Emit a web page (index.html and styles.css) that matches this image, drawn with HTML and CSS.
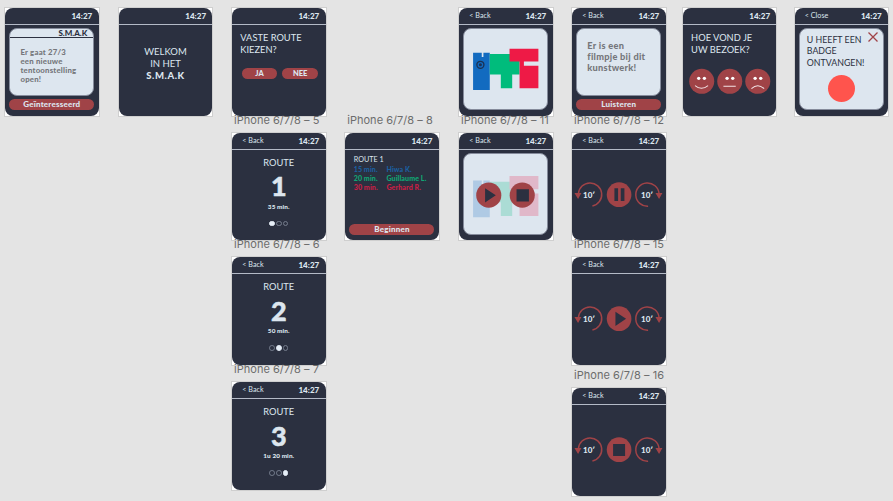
FILE: index.html
```html
<!DOCTYPE html>
<html lang="nl">
<head>
<meta charset="utf-8">
<title>S.M.A.K</title>
<link rel="stylesheet" href="styles.css">
</head>
<body>
<svg class="defs" aria-hidden="true">
  <symbol id="art" viewBox="0 0 196 124">
    <path fill="#126bc0" d="M0 13H26V26H31V13H50V124H0Z"/>
    <path fill="#00bc7c" d="M50 17H139V78H117V119H83V78H50Z"/>
    <path fill="#ee1a46" d="M109 0H196V39H152V52H196V119H139V39H109Z"/>
  </symbol>
  <symbol id="skips" viewBox="0 0 280 90">
    <g fill="none" stroke="#a04347" stroke-width="4.5">
      <path d="M19 41A35 35 0 1 1 61 78"/>
      <path d="M261 41A35 35 0 1 0 228 79"/>
    </g>
    <path fill="#a04347" d="M7 39H28L18 57ZM250 39H271L261 57Z"/>
    <circle cx="141" cy="44" r="37" fill="#a04347"/>
  </symbol>
</svg>
<main class="canvas">

  <section class="board c1 r1">
    <h2 class="label">iPhone 6/7/8</h2>
    <div class="screen">
      <header><b>14:27</b></header>
      <div class="card short">
        <div class="band">S.M.A.K</div>
        <p class="news">Er gaat 27/3<br>een nieuwe<br>tentoonstelling<br>open!</p>
      </div>
      <div class="button interest">Geïnteresseerd</div>
    </div>
  </section>

  <section class="board c2 r1">
    <h2 class="label">iPhone 6/7/8</h2>
    <div class="screen">
      <header><b>14:27</b></header>
      <p class="welcome">WELKOM<br>IN HET<br><b>S.M.A.K</b></p>
    </div>
  </section>

  <section class="board c3 r1">
    <h2 class="label">iPhone 6/7/8</h2>
    <div class="screen">
      <header><b>14:27</b></header>
      <p class="question">VASTE ROUTE<br>KIEZEN?</p>
      <div class="choices"><span class="button">JA</span><span class="button">NEE</span></div>
    </div>
  </section>

  <section class="board c5 r1">
    <h2 class="label">iPhone 6/7/8</h2>
    <div class="screen">
      <header><span>&lt; Back</span><b>14:27</b></header>
      <div class="card tall">
        <svg class="full" viewBox="0 0 254 245">
          <use href="#art" x="30" y="61" width="196" height="124"/>
          <circle cx="52" cy="110" r="10.5" fill="none" stroke="#1c3152" stroke-width="4"/>
          <circle cx="52" cy="110" r="4.5" fill="#1c3152"/>
        </svg>
      </div>
    </div>
  </section>

  <section class="board c6 r1">
    <h2 class="label">iPhone 6/7/8</h2>
    <div class="screen">
      <header><span>&lt; Back</span><b>14:27</b></header>
      <div class="card short"><p class="movie">Er is een<br>filmpje bij dit<br>kunstwerk!</p></div>
      <div class="button listen">Luisteren</div>
    </div>
  </section>

  <section class="board c7 r1">
    <h2 class="label">iPhone 6/7/8</h2>
    <div class="screen">
      <header><b>14:27</b></header>
      <p class="question visit">HOE VOND JE<br>UW BEZOEK?</p>
      <svg class="faces" viewBox="0 0 280 80">
        <g fill="#a04347"><circle cx="56" cy="40" r="37.5"/><circle cx="140" cy="40" r="37.5"/><circle cx="224" cy="40" r="37.5"/></g>
        <g fill="#fff"><circle cx="47" cy="31" r="5"/><circle cx="64" cy="31" r="5"/><circle cx="132" cy="31" r="5"/><circle cx="149" cy="31" r="5"/><circle cx="216" cy="31" r="5"/><circle cx="233" cy="31" r="5"/></g>
        <g fill="none" stroke="#f3e3e5" stroke-width="3"><path d="M36 53Q55 69 75 53M121 55H158M205 62Q224 44 243 62"/></g>
      </svg>
    </div>
  </section>

  <section class="board c8 r1">
    <h2 class="label">iPhone 6/7/8</h2>
    <div class="screen">
      <header><span>&lt; Close</span><b>14:27</b></header>
      <div class="card tall badge">
        <p>U HEEFT EEN<br>BADGE<br>ONTVANGEN!</p>
        <svg class="cross" viewBox="0 0 10 10"><path d="M.5.5 9.5 9.5M9.5.5.5 9.5" stroke="#a04347" stroke-width="1.3"/></svg>
        <div class="dot"></div>
      </div>
    </div>
  </section>

  <section class="board c3 r2">
    <h2 class="label">iPhone 6/7/8 – 5</h2>
    <div class="screen">
      <header><span>&lt; Back</span><b>14:27</b></header>
      <div class="route"><h3>ROUTE</h3><strong>1</strong><small>35 min.</small>
        <div class="pager"><i class="on"></i><i></i><i></i></div></div>
    </div>
  </section>

  <section class="board c4 r2">
    <h2 class="label">iPhone 6/7/8 – 8</h2>
    <div class="screen">
      <header><b>14:27</b></header>
      <div class="plan">
        <h3>ROUTE 1</h3>
        <div class="stop blue"><span>15 min.</span><span>Hiwa K.</span></div>
        <div class="stop green"><span>20 min.</span><span>Guillaume L.</span></div>
        <div class="stop red"><span>30 min.</span><span>Gerhard R.</span></div>
      </div>
      <div class="button begin">Beginnen</div>
    </div>
  </section>

  <section class="board c5 r2">
    <h2 class="label">iPhone 6/7/8 – 11</h2>
    <div class="screen">
      <header><span>&lt; Back</span><b>14:27</b></header>
      <div class="card tall">
        <svg class="full" viewBox="0 0 254 245">
          <use href="#art" x="30" y="69" width="196" height="124" opacity=".22"/>
          <g fill="#a04347"><circle cx="77" cy="126" r="37.5"/><circle cx="177" cy="126" r="37.5"/></g>
          <path fill="#2b3040" d="M66 105 98 126 66 148ZM160 108H197V145H160Z"/>
        </svg>
      </div>
    </div>
  </section>

  <section class="board c6 r2">
    <h2 class="label">iPhone 6/7/8 – 12</h2>
    <div class="screen">
      <header><span>&lt; Back</span><b>14:27</b></header>
      <svg class="controls" viewBox="0 0 280 90"><use href="#skips" width="280" height="90"/>
        <path fill="#2b3040" d="M127 25H138V63H127ZM146 25H157V63H146Z"/>
        <text x="51" y="53">10′</text><text x="225" y="53">10′</text></svg>
    </div>
  </section>

  <section class="board c3 r3">
    <h2 class="label">iPhone 6/7/8 – 6</h2>
    <div class="screen">
      <header><span>&lt; Back</span><b>14:27</b></header>
      <div class="route"><h3>ROUTE</h3><strong>2</strong><small>50 min.</small>
        <div class="pager"><i></i><i class="on"></i><i></i></div></div>
    </div>
  </section>

  <section class="board c6 r3">
    <h2 class="label">iPhone 6/7/8 – 15</h2>
    <div class="screen">
      <header><span>&lt; Back</span><b>14:27</b></header>
      <svg class="controls" viewBox="0 0 280 90"><use href="#skips" width="280" height="90"/>
        <path fill="#2b3040" d="M130 23 162 44 130 66Z"/>
        <text x="51" y="53">10′</text><text x="225" y="53">10′</text></svg>
    </div>
  </section>

  <section class="board c3 r4">
    <h2 class="label">iPhone 6/7/8 – 7</h2>
    <div class="screen">
      <header><span>&lt; Back</span><b>14:27</b></header>
      <div class="route"><h3>ROUTE</h3><strong>3</strong><small>1u 20 min.</small>
        <div class="pager"><i></i><i></i><i class="on"></i></div></div>
    </div>
  </section>

  <section class="board c6 r5">
    <h2 class="label">iPhone 6/7/8 – 16</h2>
    <div class="screen">
      <header><span>&lt; Back</span><b>14:27</b></header>
      <svg class="controls" viewBox="0 0 280 90"><use href="#skips" width="280" height="90"/>
        <path fill="#2b3040" d="M123 27H159V63H123Z"/>
        <text x="51" y="53">10′</text><text x="225" y="53">10′</text></svg>
    </div>
  </section>
</main>
</body>
</html>
```
FILE: styles.css
```css
* { box-sizing: border-box; margin: 0; padding: 0; }
body { background: #e4e4e4; overflow: hidden; font-family: Lato, sans-serif; }
.defs { position: absolute; width: 0; height: 0; }
.canvas { position: relative; width: 893px; height: 501px; overflow: hidden; }

/* Artboards on the free canvas */
.board { position: absolute; width: 93.5px; height: 107.7px; background: #fff; box-shadow: 0 0 0 1px #cfcfcf; }
.c1 { left: 5px; } .c2 { left: 118.8px; } .c3 { left: 232px; } .c4 { left: 345.2px; }
.c5 { left: 459px; } .c6 { left: 572px; } .c7 { left: 682.8px; } .c8 { left: 794.5px; }
.r1 { top: 8px; } .r2 { top: 132.7px; } .r3 { top: 257.4px; } .r4 { top: 382px; } .r5 { top: 388.2px; }
.label { position: absolute; left: 2px; top: -20px; font: 400 11px/14px Inter, sans-serif; letter-spacing: .03px; color: #6c6c6c; white-space: nowrap; }

.screen { height: 100%; background: #2b3040; border-radius: 8px; color: #dde6ef; overflow: hidden; display: flex; flex-direction: column; }
header { flex: none; height: 17px; border-bottom: 1px solid #b4bac7; display: flex; align-items: center; padding: 0 6.2px 0 10.3px; font-size: 7.2px; line-height: 16px; white-space: nowrap; }
header b { margin-left: auto; font-weight: 900; font-size: 8.1px; }

.card { flex: none; margin: 3px 0 0 4.3px; width: 85px; background: #dde6ef; border: 1px solid #858b9b; border-radius: 8px; overflow: hidden; }
.short { height: 67.5px; }
.tall { height: 82px; }
.full { display: block; width: 85px; height: 82px; margin: -1px; }
.band { height: 9px; border-bottom: 1px solid #2b3040; text-align: right; padding-right: 6px; font-size: 8px; line-height: 9px; font-weight: 900; color: #2b3040; }
.news { margin: 9.5px 0 0 10.2px; font-size: 7.8px; line-height: 9px; font-weight: 900; letter-spacing: .2px; color: #75777b; }
.movie { margin: 10.5px 0 0 10px; font-size: 9.2px; line-height: 11px; font-weight: 900; letter-spacing: .28px; color: #75777b; }
.button { background: #a04347; border-radius: 6px; height: 11.3px; line-height: 11px; font-size: 8px; font-weight: 900; text-align: center; }
.interest, .listen, .begin { width: 85px; margin: 3.5px 0 0 4.3px; flex: none; letter-spacing: .2px; }

.welcome { text-align: center; margin-top: 20.5px; font-size: 9.5px; line-height: 12px; }
.welcome b { font-weight: 900; letter-spacing: .6px; }
.question { margin: 6.5px 0 0 8.3px; font-size: 9.3px; line-height: 12px; white-space: nowrap; }
.choices { display: flex; gap: 5px; margin: 12.5px 0 0 9.7px; }
.choices .button { width: 35.7px; font-size: 7.5px; }
.faces { flex: none; width: 93.5px; height: 26.7px; margin-top: 12.2px; }
.badge { display: grid; grid-template-columns: 1fr 10px; padding: 4.5px 4px 0 7px; align-content: start; }
.badge p { font-size: 8.8px; line-height: 11.7px; color: #2b3040; white-space: nowrap; }
.cross { width: 10px; height: 10px; margin: -1.5px 0 0 -1px; }
.dot { grid-column: 1 / 3; width: 27px; height: 27px; border-radius: 50%; background: #ff544d; margin: 6px 0 0 21px; }

.route { display: flex; flex-direction: column; align-items: center; padding-top: 7px; }
.route h3 { font-size: 9.3px; line-height: 12px; font-weight: 400; }
.route strong { font-size: 27px; line-height: 28px; font-weight: 900; margin-top: 3.5px; -webkit-text-stroke: .5px #dde6ef; }
.route small { font-size: 6.4px; line-height: 8px; font-weight: 900; margin-top: 2.5px; letter-spacing: .1px; }
.pager { display: flex; gap: .9px; margin-top: 10px; }
.pager i { width: 5.8px; height: 5.8px; border: .8px solid #747c8c; border-radius: 50%; }
.pager .on { background: #e6eef7; border-color: #e6eef7; }

.plan { padding: 5px 0 0 8.5px; font-size: 7.1px; line-height: 9px; }
.plan h3 { font-size: 7.2px; line-height: 10px; font-weight: 400; margin-bottom: .5px; }
.stop { display: grid; grid-template-columns: 32.7px 1fr; font-weight: 900; white-space: nowrap; letter-spacing: .08px; }
.blue { color: #1c5f9f; } .green { color: #10a674; } .red { color: #c81f46; }
.begin { margin-top: 31.5px; }

.controls { flex: none; width: 93.5px; height: 30px; margin-top: 30px; }
.controls text { font: 900 24px Lato, sans-serif; fill: #dde6ef; text-anchor: middle; }
```
